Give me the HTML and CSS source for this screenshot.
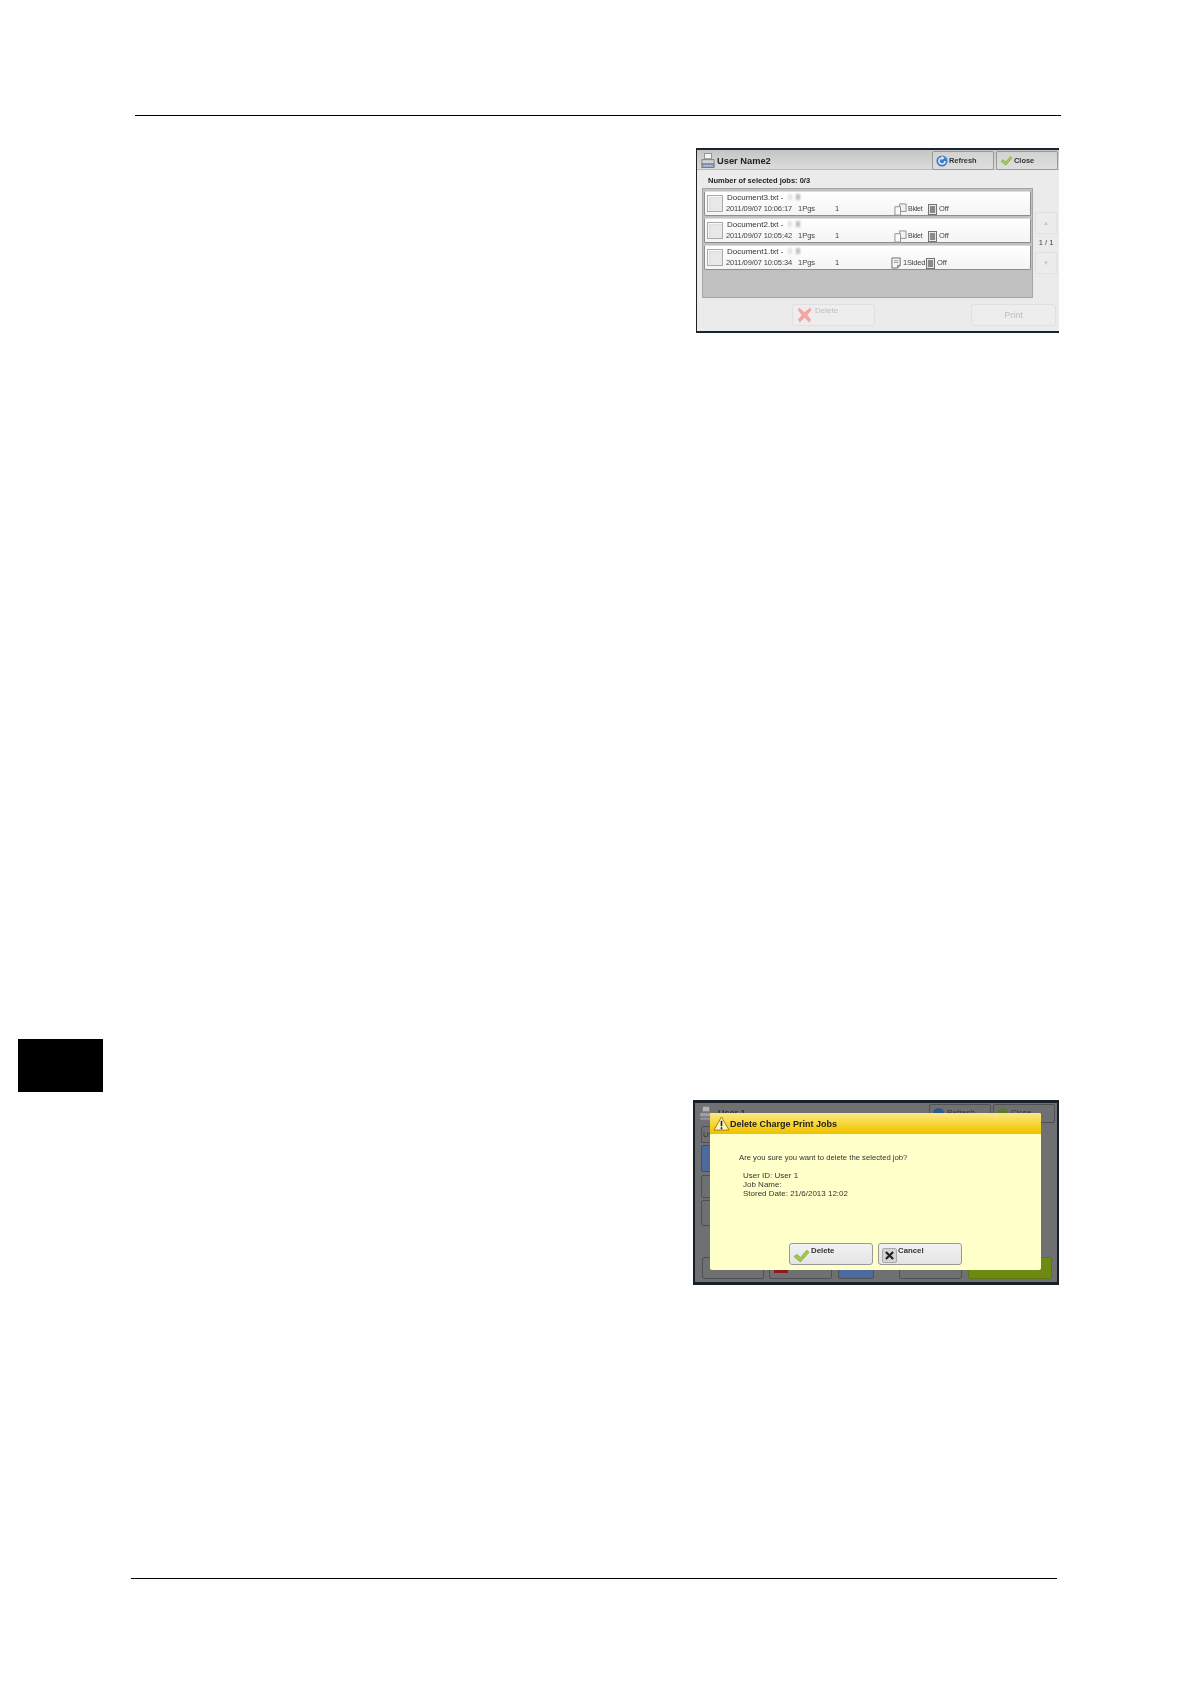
FILE: index.html
```html
<!DOCTYPE html>
<html lang="en">
<head>
<meta charset="utf-8">
<title>Charge Print Jobs</title>
<link rel="stylesheet" href="styles.css">
</head>
<body>
<svg class="defs" width="0" height="0" aria-hidden="true">
  <symbol id="printer" viewBox="0 0 16 18">
    <rect x="4" y="1" width="8" height="6" fill="#f4f4f4" stroke="#8a8a8a"/>
    <path d="M1 8h14v5H1z" fill="#cfd2d6" stroke="#77797c"/>
    <rect x="1" y="13" width="14" height="4" fill="#8f9fc4" stroke="#6f7480"/>
    <path d="M3 15h10" stroke="#e6e9f2" stroke-dasharray="2 1"/>
  </symbol>
  <symbol id="book" viewBox="0 0 14 14">
    <path d="M6 1h7v8H6z" fill="#f2f2f2" stroke="#8c8c8c"/>
    <path d="M1 4h6v9H1z" fill="#fafafa" stroke="#8c8c8c"/>
  </symbol>
  <symbol id="sided" viewBox="0 0 12 13">
    <path d="M1 1h9v8l-3 3H1z" fill="#f5f5f5" stroke="#666"/>
    <path d="M3 4h5M3 6h5" stroke="#999"/>
    <path d="M7 12l3-3H7z" fill="#aaa" stroke="#666" stroke-width=".6"/>
  </symbol>
  <symbol id="off" viewBox="0 0 10 12">
    <rect x=".5" y=".5" width="9" height="11" fill="#f4f4f4" stroke="#666"/>
    <rect x="2" y="2" width="6" height="8" fill="#8a8a8a"/>
  </symbol>
  <symbol id="check" viewBox="0 0 16 14">
    <path d="M1 8l3-2 3 3 6-7 2 2-8 9z" fill="#a4cc4a" stroke="#7a9c3a" stroke-width=".7"/>
  </symbol>
  <symbol id="refresh" viewBox="0 0 14 14">
    <circle cx="7" cy="7" r="6.5" fill="#3f7fc0"/>
    <path d="M10.500 7A3.500 3.500 0 1 1 7 3.500" fill="none" stroke="#dfeaf6" stroke-width="1.800"/>
    <path d="M6.500 1l3.500 2.500L6.500 6z" fill="#dfeaf6"/>
  </symbol>
  <symbol id="cross" viewBox="0 0 16 18">
    <path d="M2 1l6 5 6-5 1.500 3L11 9l4 5-2 3-5-5-5 5-2-3 4-5L1 4z" fill="#f3a5a5"/>
  </symbol>
</svg>

<main class="page">
  <hr class="rule rule-top">

  <section class="fig-row fig-one">
    <div class="screen">
      <header class="bar">
        <svg class="bar-icon"><use href="#printer"/></svg>
        <h2 class="bar-title">User Name2</h2>
        <button class="top-btn"><svg class="ic-13"><use href="#refresh"/></svg>Refresh</button>
        <button class="top-btn"><svg class="ic-close"><use href="#check"/></svg>Close</button>
      </header>
      <p class="count">Number of selected jobs: 0/3</p>
      <div class="body">
        <div class="list">
          <div class="job">
            <span class="box"></span>
            <div class="job-text">
              <div class="job-name">Document3.txt - <span class="smudge"></span><span class="smudge dark"></span></div>
              <div class="job-meta">
                <span class="c-date">2011/09/07 10:06:17</span><span class="c-pgs">1Pgs</span><span class="c-qty">1</span>
                <svg class="ic-book"><use href="#book"/></svg><span class="c-kind">Bklet</span>
                <svg class="ic-off"><use href="#off"/></svg><span>Off</span>
              </div>
            </div>
          </div>
          <div class="job">
            <span class="box"></span>
            <div class="job-text">
              <div class="job-name">Document2.txt - <span class="smudge"></span><span class="smudge dark"></span></div>
              <div class="job-meta">
                <span class="c-date">2011/09/07 10:05:42</span><span class="c-pgs">1Pgs</span><span class="c-qty">1</span>
                <svg class="ic-book"><use href="#book"/></svg><span class="c-kind">Bklet</span>
                <svg class="ic-off"><use href="#off"/></svg><span>Off</span>
              </div>
            </div>
          </div>
          <div class="job">
            <span class="box"></span>
            <div class="job-text">
              <div class="job-name">Document1.txt - <span class="smudge"></span><span class="smudge dark"></span></div>
              <div class="job-meta">
                <span class="c-date">2011/09/07 10:05:34</span><span class="c-pgs">1Pgs</span><span class="c-qty c-qty-b">1</span>
                <svg class="ic-sided"><use href="#sided"/></svg><span class="c-kind c-kind-b">1Sided</span>
                <svg class="ic-off"><use href="#off"/></svg><span>Off</span>
              </div>
            </div>
          </div>
        </div>
        <div class="pager">
          <button class="page-btn">&#9650;</button>
          <span class="page-no">1 / 1</span>
          <button class="page-btn">&#9660;</button>
        </div>
      </div>
      <footer class="actions">
        <button class="act act-delete"><svg class="ic-cross"><use href="#cross"/></svg><span>Delete</span></button>
        <button class="act act-print">Print</button>
      </footer>
    </div>
  </section>

  <div class="side-tab"></div>

  <section class="fig-row fig-two">
    <div class="screen dim">
      <header class="d-bar">
        <svg class="d-print"><use href="#printer"/></svg>
        <span class="d-title">User 1</span>
        <span class="d-btn"><i class="d-dot"></i>Refresh</span>
        <span class="d-btn"><i class="d-dot d-dot-g"></i>Close</span>
      </header>
      <div class="d-side">
        <span class="d-item d-us">Us</span>
        <span class="d-item d-blue"></span>
        <span class="d-item d-a"></span>
        <span class="d-item d-b"></span>
      </div>
      <div class="d-foot">
        <span class="d-key d-k1"></span>
        <span class="d-key d-k2"><i class="d-red"></i></span>
        <span class="d-key d-k3"></span>
        <span class="d-key d-k4"></span>
        <span class="d-key d-k5"></span>
      </div>

      <div class="dialog">
        <div class="dlg-head">
          <svg class="ic-warn" viewBox="0 0 18 16">
            <path d="M9 1l8 14H1z" fill="#fff6c8" stroke="#9a7a10"/>
            <path d="M9 5v6M9 12v2" stroke="#222" stroke-width="1.700"/>
          </svg>
          <h3 class="dlg-title">Delete Charge Print Jobs</h3>
        </div>
        <div class="dlg-body">
          <p class="dlg-q">Are you sure you want to delete the selected job?</p>
          <p class="dlg-line">User ID: User 1</p>
          <p class="dlg-line">Job Name:</p>
          <p class="dlg-line">Stored Date: 21/6/2013 12:02</p>
        </div>
        <div class="dlg-actions">
          <button class="dlg-btn"><svg class="ic-ok"><use href="#check"/></svg><span>Delete</span></button>
          <button class="dlg-btn">
            <span class="x-box"><svg viewBox="0 0 10 10" class="ic-x"><path d="M1 1l8 8M9 1l-8 8" stroke="#222" stroke-width="2.400"/></svg></span>
            <span>Cancel</span>
          </button>
        </div>
      </div>
    </div>
  </section>

  <hr class="rule rule-bottom">
</main>
</body>
</html>
```

FILE: styles.css
```css
* { box-sizing: border-box; }
html, body { margin: 0; padding: 0; background: #fefefe; }
.defs { position: absolute; }
.page {
  width: 1190px;
  height: 1684px;
  padding-top: 115px;
  font-family: "Liberation Sans", Arial, sans-serif;
  color: #222;
  overflow: hidden;
}
.rule { border: 0; height: 1px; margin: 0; background: #000; }
.rule-top { width: 926px; margin-left: 135px; }
.rule-bottom { width: 926px; margin-left: 131px; margin-top: 293px; }
.fig-row { display: flex; justify-content: flex-end; padding-right: 131px; }
.fig-one { margin-top: 32px; }
.fig-two { margin-top: 8px; }
.side-tab { width: 85px; height: 53px; margin: 706px 0 0 18px; background: #000; }

/* panel 1 */
.screen {
  width: 363px;
  height: 185px;
  background: #ebebeb;
  border-top: 2px solid #1a2430;
  border-bottom: 2px solid #1a2430;
  border-left: 1px solid #222;
  display: flex;
  flex-direction: column;
  filter: blur(0.45px);
}
.bar {
  height: 20px;
  display: flex;
  align-items: center;
  padding: 2px 1px 0 4px;
  background: linear-gradient(#c4c4c4, #dcdcdc);
  border-bottom: 1px solid #bbb;
}
.bar-icon { width: 14px; height: 17px; flex: none; }
.bar-title { margin: 0 0 0 2px; flex: 1; font-size: 9.300px; font-weight: 700; color: #222; }
.top-btn {
  width: 62px;
  height: 19px;
  margin-left: 2px;
  padding: 0 0 0 3px;
  display: flex;
  align-items: center;
  gap: 1px;
  font: 700 7.400px "Liberation Sans", Arial, sans-serif;
  color: #333;
  background: linear-gradient(#d2d2d2, #dedede);
  border: 1px solid #999;
  border-radius: 2px;
}
.ic-13 { width: 12px; height: 12px; }
.ic-close { width: 13px; height: 11px; margin-left: 0; }
.count { margin: 0; height: 18px; padding: 6px 0 0 11px; font-size: 7.500px; font-weight: 700; line-height: 10px; color: #222; }
.body { display: flex; padding-left: 5px; }
.list {
  width: 331px;
  height: 110px;
  padding: 2px 1px;
  background: #c0c0c0;
  border: 1px solid #a5a5a5;
  display: flex;
  flex-direction: column;
  gap: 2px;
}
.job {
  height: 25px;
  flex: none;
  display: flex;
  align-items: center;
  padding-left: 2px;
  background: linear-gradient(#fff, #f4f4f4);
  border: 1px solid #8d8d8d;
  border-top-color: #ddd;
  border-radius: 2px;
}
.box {
  width: 16px;
  height: 17px;
  flex: none;
  background: #e8e8e8;
  border: 1px solid #aaa;
  box-shadow: inset 1px 1px 0 #f8f8f8, inset 2px 2px 2px #ddd;
}
.job-text { margin-left: 3px; }
.job-name { font-size: 8px; line-height: 11px; padding-left: 1px; color: #333; white-space: nowrap; }
.smudge { display: inline-block; width: 4px; height: 6px; margin-left: 2px; background: #e2e2e2; filter: blur(1px); }
.smudge.dark { background: #bbb; margin-left: 4px; }
.job-meta { display: flex; align-items: center; font-size: 7.500px; line-height: 12px; height: 12px; color: #444; white-space: nowrap; }
.c-date { width: 72px; letter-spacing: -.12px; }
.c-pgs { width: 37px; }
.c-qty { width: 59px; }
.c-qty-b { width: 56px; }
.ic-book { width: 13px; height: 13px; margin-right: 1px; flex: none; }
.ic-sided { width: 11px; height: 12px; margin-right: 1px; flex: none; }
.c-kind { width: 20px; font-size: 7px; letter-spacing: -.2px; }
.c-kind-b { width: 23px; font-size: 7.500px; }
.ic-off { width: 9px; height: 11px; margin-right: 2px; flex: none; }
.pager { width: 22px; margin-left: 2px; padding-top: 24px; display: flex; flex-direction: column; align-items: center; }
.page-btn {
  width: 22px;
  height: 22px;
  flex: none;
  padding: 0;
  font-size: 6px;
  color: #c4c4c4;
  background: #ececec;
  border: 1px solid #e0e0e0;
  border-radius: 1px;
}
.page-no { height: 18px; font-size: 7.500px; line-height: 18px; color: #444; }
.actions { display: flex; padding: 6px 3px 0 95px; }
.act {
  height: 22px;
  padding: 0;
  font: 8px "Liberation Sans", Arial, sans-serif;
  color: #bdbdbd;
  background: #ededed;
  border: 1px solid #e0e0e0;
  border-radius: 3px;
}
.act-delete { width: 83px; display: flex; align-items: flex-start; padding: 1px 0 0 4px; }
.ic-cross { width: 15px; height: 18px; flex: none; }
.act-delete span { margin: 0 0 0 3px; }
.act-print { width: 85px; margin-left: auto; font-size: 9px; }

/* panel 2 */
.dim {
  position: relative;
  width: 366px;
  background: #6f7072;
  border: 3px solid #1a2028;
  border-left-width: 2px;
  border-right-width: 2px;
  height: 185px;
}
.d-bar { height: 20px; display: flex; align-items: center; padding-left: 4px; color: #333; }
.d-print { width: 14px; height: 17px; opacity: .5; flex: none; }
.d-title { flex: 1; margin-left: 5px; font-size: 9px; font-weight: 700; }
.d-btn {
  width: 62px;
  height: 19px;
  margin-right: 2px;
  padding: 3px 0 0 3px;
  display: flex;
  gap: 3px;
  font-size: 8px;
  color: #333;
  border: 1px solid #4f5052;
  border-radius: 2px;
}
.d-dot { display: block; width: 11px; height: 11px; border-radius: 50%; background: #2f5888; }
.d-dot-g { background: #5f7a2a; }
.d-side { width: 60px; padding: 3px 0 0 6px; display: flex; flex-direction: column; }
.d-item { display: block; height: 17px; border: 1px solid #4f5052; border-radius: 2px; font-size: 8px; color: #333; line-height: 15px; padding-left: 1px; }
.d-blue { height: 27px; margin-top: 2px; background: #4d6a9e; border-color: #36507e; }
.d-a { height: 23px; margin-top: 3px; }
.d-b { height: 26px; margin-top: 2px; }
.d-foot { margin-top: 31px; padding-left: 7px; display: flex; height: 22px; }
.d-key { display: block; height: 22px; border: 1px solid #4f5052; border-radius: 2px; }
.d-k1 { width: 62px; }
.d-k2 { width: 63px; margin-left: 5px; padding-left: 3px; }
.d-red { display: block; width: 14px; height: 4px; margin: 11px 0 0 1px; background: #8c1c1c; }
.d-k3 { width: 36px; margin-left: 6px; background: #4d6a9e; }
.d-k4 { width: 63px; margin-left: 25px; }
.d-k5 { width: 84px; margin-left: 6px; background: #6f8a14; border-color: #5d7610; }
.dialog {
  position: absolute;
  left: 15px;
  top: 10px;
  width: 331px;
  height: 157px;
  display: flex;
  flex-direction: column;
  background: #ffffc9;
  border-radius: 2px;
}
.dlg-head {
  height: 21px;
  flex: none;
  display: flex;
  align-items: center;
  padding-left: 3px;
  background: linear-gradient(#fbe88a, #f5cf1a 70%, #f0c000);
  border-radius: 2px 2px 0 0;
}
.ic-warn { width: 17px; height: 15px; flex: none; }
.dlg-title { margin: 0; font-size: 9px; font-weight: 700; color: #222; white-space: nowrap; }
.dlg-body { height: 109px; padding: 19px 0 0 29px; }
.dlg-q { margin: 0 0 8px; font-size: 7.700px; line-height: 10px; color: #333; }
.dlg-line { margin: 0 0 0 4px; font-size: 8px; line-height: 9px; color: #333; }
.dlg-actions { display: flex; gap: 5px; padding-left: 79px; }
.dlg-btn {
  width: 84px;
  height: 22px;
  padding: 1px 0 0 3px;
  display: flex;
  align-items: flex-start;
  font: 700 7.800px "Liberation Sans", Arial, sans-serif;
  color: #333;
  background: linear-gradient(#f2f2f2, #e4e4e4);
  border: 1px solid #999;
  border-radius: 3px;
}
.dlg-btn span:last-child { margin: 1px 0 0 1px; }
.ic-ok { width: 17px; height: 15px; margin-top: 3px; flex: none; }
.x-box { width: 15px; height: 15px; margin-top: 3px; display: flex; align-items: center; justify-content: center; background: #d4d4d4; border: 1px solid #aaa; border-radius: 2px; flex: none; }
.ic-x { width: 9px; height: 9px; }
```
